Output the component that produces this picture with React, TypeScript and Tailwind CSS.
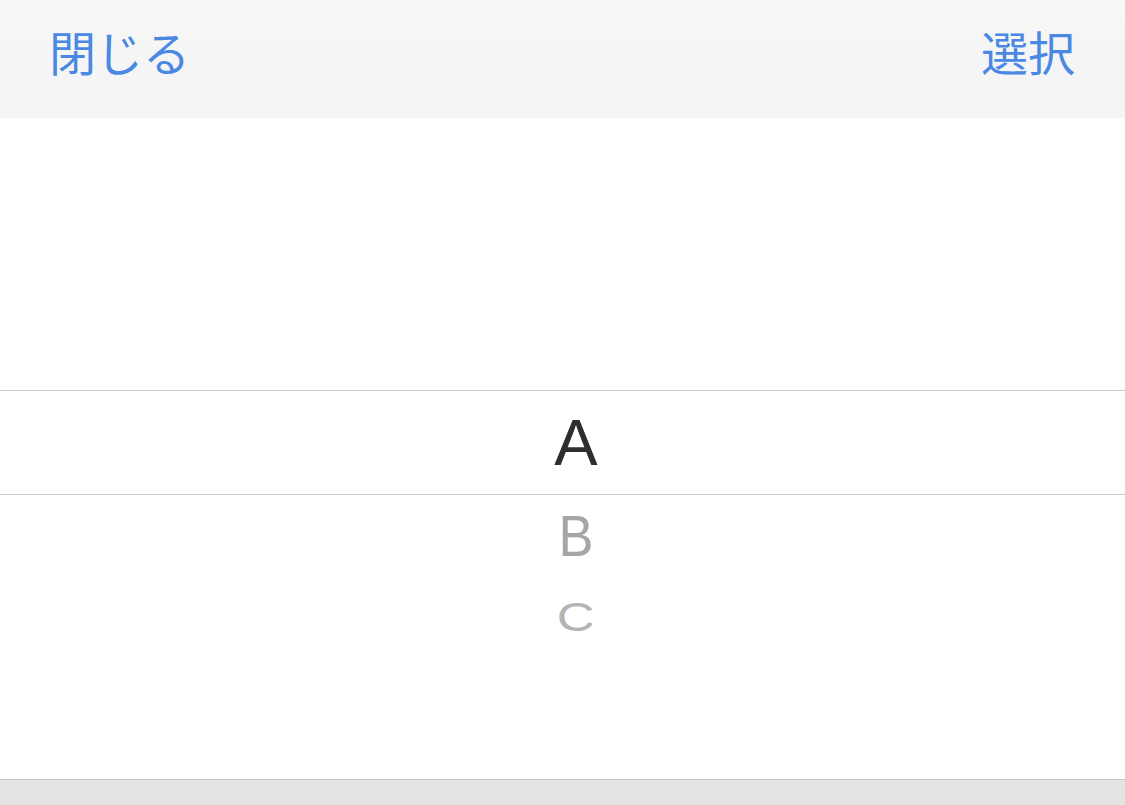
export default function App() {
  const jp = { fontFamily: '"Noto Sans CJK JP", "Liberation Sans", sans-serif' };
  const latin = { fontFamily: '"Liberation Sans", Arial, sans-serif' };

  return (
    <div className="flex h-[805px] w-[1125px] flex-col overflow-hidden bg-white">
      {/* Toolbar */}
      <div
        className="flex h-[118px] flex-none items-center justify-between bg-gradient-to-b from-[#f7f7f7] to-[#f4f4f4] pl-[49px] pr-[50px] pb-[18px]"
        style={jp}
      >
        <button className="text-[47px] leading-none text-[#4a88e4]">閉じる</button>
        <button className="text-[47px] leading-none text-[#4a88e4]">選択</button>
      </div>

      {/* Picker */}
      <div className="flex flex-1 flex-col pl-[27px]" style={latin}>
        <div className="h-[272px] flex-none" />
        <div className="-ml-[27px] flex h-[105px] flex-none items-center justify-center border-y border-[#c8c8c8] pl-[27px]">
          <span className="text-[65px] leading-none text-[#2e2e2e]">A</span>
        </div>
        <div className="flex h-[82px] flex-none items-center justify-center">
          <span className="scale-x-[0.92] text-[57px] leading-none text-[#a6a6a6]">B</span>
        </div>
        <div className="flex h-[78px] flex-none items-center justify-center">
          <span className="scale-x-[0.92] scale-y-[0.72] text-[57px] leading-none text-[#b4b4b4]">C</span>
        </div>
        <div className="flex-1" />
      </div>

      {/* Bottom bar */}
      <div className="h-[26px] flex-none border-t border-[#c6c6c6] bg-[#e4e4e4]" />
    </div>
  );
}
